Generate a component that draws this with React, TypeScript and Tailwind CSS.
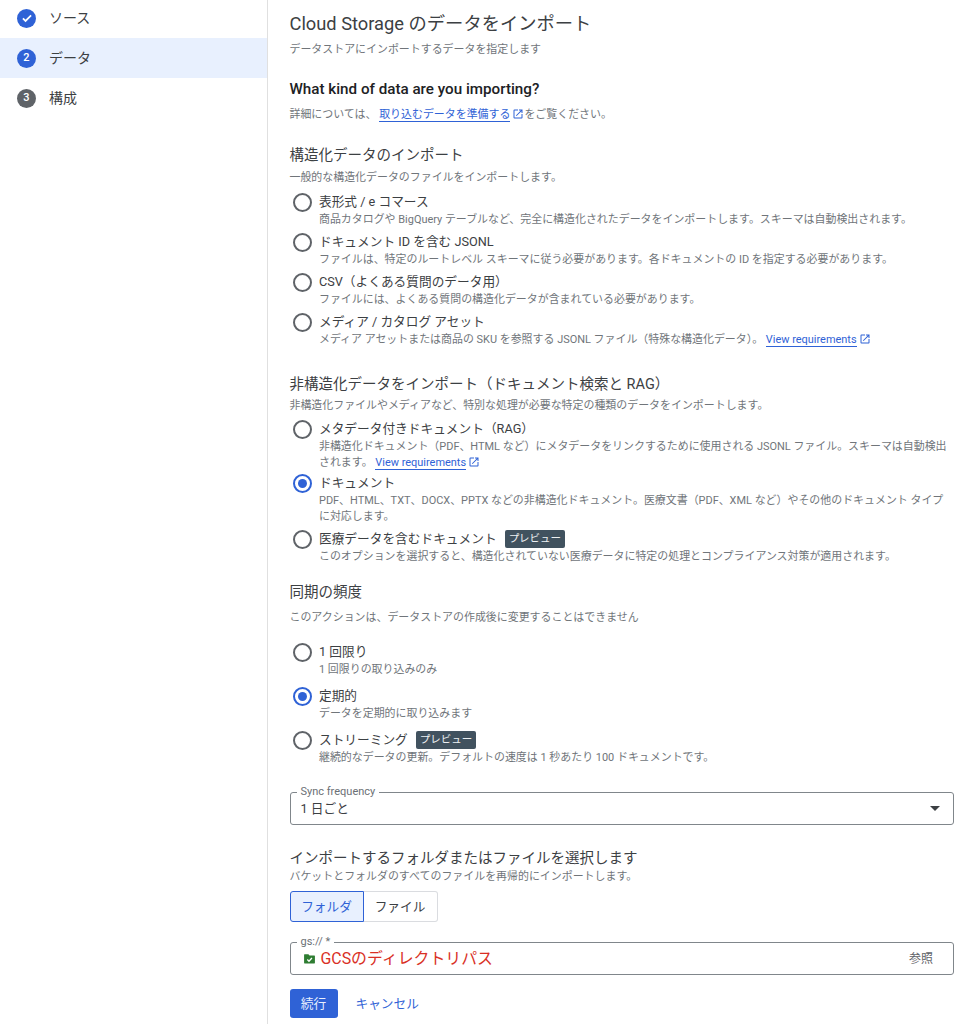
import React from "react";

const font = "font-['Roboto','Noto_Sans_CJK_JP',sans-serif]";

function Ext() {
  return (
    <svg viewBox="0 0 24 24" className="inline-block w-[12px] h-[12px] ml-[2px] align-[-2px]" fill="#2f62d6">
      <path d="M19 19H5V5h7V3H5a2 2 0 0 0-2 2v14a2 2 0 0 0 2 2h14c1.1 0 2-.9 2-2v-7h-2v7zM14 3v2h3.59l-9.83 9.83 1.41 1.41L19 6.41V10h2V3h-7z" />
    </svg>
  );
}

function LinkText({ children }: { children: React.ReactNode }) {
  return <span className="inline-block leading-[13px] text-[#2f62d6] border-b border-[#2f62d6]">{children}</span>;
}

function Badge() {
  return <span className="inline-flex items-center h-[18px] px-[4px] ml-[8px] rounded-[2px] bg-[#41525f] text-[#eef1f3] text-[10.5px] leading-none">プレビュー</span>;
}

function Radio({ checked }: { checked?: boolean }) {
  return (
    <span className={`shrink-0 flex items-center justify-center w-[19px] h-[19px] rounded-full border-2 ${checked ? "border-[#2f62d6]" : "border-[#5f6368]"}`}>
      {checked && <span className="block w-[9px] h-[9px] rounded-full bg-[#2f62d6]" />}
    </span>
  );
}

function Option({ title, badge, checked, className, children }: { title: string; badge?: boolean; checked?: boolean; className?: string; children: React.ReactNode }) {
  return (
    <div className={`flex ${className ?? ""}`}>
      <div className="w-[29.5px] pl-[3px] -mt-[1px]"><Radio checked={checked} /></div>
      <div className="flex-1 min-w-0">
        <div className="flex items-center h-[16px] text-[12.7px] text-[#3c4043]">{title}{badge && <Badge />}</div>
        <div className="text-[10.95px] leading-[16px] text-[#70757a] mt-[2px] pr-[5px]">{children}</div>
      </div>
    </div>
  );
}

function Step({ n, label, state }: { n: string; label: string; state: "done" | "active" | "todo" }) {
  return (
    <div className={`flex items-center h-[40px] pl-[17px] gap-[13px] ${state === "active" ? "bg-[#e8f0fe]" : ""}`}>
      <span className={`flex items-center justify-center w-[19px] h-[19px] rounded-full text-white text-[11px] font-medium ${state === "todo" ? "bg-[#5f6368]" : "bg-[#2f62d6]"}`}>
        {state === "done" ? (
          <svg viewBox="0 0 24 24" className="w-[14px] h-[14px]" fill="none" stroke="white" strokeWidth="3"><path d="M5 12.5l4.5 4.5L19 7.5" /></svg>
        ) : n}
      </span>
      <span className="text-[14px] text-[#3c4043]">{label}</span>
    </div>
  );
}

function Heading({ children, className }: { children: React.ReactNode; className?: string }) {
  return <div className={`text-[14.5px] leading-[20px] text-[#3c4043] ${className ?? ""}`}>{children}</div>;
}

function Sub({ children, className }: { children: React.ReactNode; className?: string }) {
  return <div className={`text-[10.95px] leading-[16px] text-[#70757a] ${className ?? ""}`}>{children}</div>;
}

function Legend({ children }: { children: React.ReactNode }) {
  return <span className="absolute -top-[7px] left-[6px] px-[4px] bg-white text-[11px] leading-[12px] text-[#6b7075]">{children}</span>;
}

export default function App() {
  return (
    <div className={`${font} flex w-[968px] h-[1024px] overflow-hidden bg-white`}>
      <aside className="w-[268px] shrink-0 border-r border-[#e0e0e0] -mt-[2px]">
        <Step n="1" label="ソース" state="done" />
        <Step n="2" label="データ" state="active" />
        <Step n="3" label="構成" state="todo" />
      </aside>
      <main className="flex-1 min-w-0 pl-[21.5px] pr-[14px]">
        <h1 className="mt-[12px] text-[18.3px] leading-[24px] text-[#3c4043]">Cloud Storage のデータをインポート</h1>
        <Sub className="mt-[6px]">データストアにインポートするデータを指定します</Sub>

        <div className="mt-[21px] text-[15.2px] leading-[20px] font-medium text-[#202124]">What kind of data are you importing?</div>
        <Sub className="mt-[8px]">詳細については、 <LinkText>取り込むデータを準備する</LinkText><Ext />をご覧ください。</Sub>

        <Heading className="mt-[23px]">構造化データのインポート</Heading>
        <Sub className="mt-[4px]">一般的な構造化データのファイルをインポートします。</Sub>

        <Option className="mt-[8px]" title="表形式 / e コマース">商品カタログや BigQuery テーブルなど、完全に構造化されたデータをインポートします。スキーマは自動検出されます。</Option>
        <Option className="mt-[6px]" title="ドキュメント ID を含む JSONL">ファイルは、特定のルートレベル スキーマに従う必要があります。各ドキュメントの ID を指定する必要があります。</Option>
        <Option className="mt-[6px]" title="CSV（よくある質問のデータ用）">ファイルには、よくある質問の構造化データが含まれている必要があります。</Option>
        <Option className="mt-[6px]" title="メディア / カタログ アセット">メディア アセットまたは商品の SKU を参照する JSONL ファイル（特殊な構造化データ）。 <LinkText>View requirements</LinkText><Ext /></Option>

        <Heading className="mt-[27px]">非構造化データをインポート（ドキュメント検索と RAG）</Heading>
        <Sub className="mt-[3px]">非構造化ファイルやメディアなど、特別な処理が必要な特定の種類のデータをインポートします。</Sub>

        <Option className="mt-[7px]" title="メタデータ付きドキュメント（RAG）">非構造化ドキュメント（PDF、HTML など）にメタデータをリンクするために使用される JSONL ファイル。スキーマは自動検出されます。 <LinkText>View requirements</LinkText><Ext /></Option>
        <Option className="mt-[4px]" checked title="ドキュメント">PDF、HTML、TXT、DOCX、PPTX などの非構造化ドキュメント。医療文書（PDF、XML など）やその他のドキュメント タイプに対応します。</Option>
        <Option className="mt-[6px]" badge title="医療データを含むドキュメント">このオプションを選択すると、構造化されていない医療データに特定の処理とコンプライアンス対策が適用されます。</Option>

        <Heading className="mt-[18px]">同期の頻度</Heading>
        <Sub className="mt-[7px]">このアクションは、データストアの作成後に変更することはできません</Sub>

        <Option className="mt-[18px]" title="1 回限り">1 回限りの取り込みのみ</Option>
        <Option className="mt-[10px]" checked title="定期的">データを定期的に取り込みます</Option>
        <Option className="mt-[10px]" badge title="ストリーミング">継続的なデータの更新。デフォルトの速度は 1 秒あたり 100 ドキュメントです。</Option>

        <div className="relative mt-[26px] flex items-center justify-between h-[33px] pl-[10px] pr-[13px] border border-[#80868b] rounded-[3px] text-[12.7px] text-[#3c4043]">
          <Legend>Sync frequency</Legend>
          <span>1 日ごと</span>
          <span className="w-0 h-0 border-x-[5px] border-x-transparent border-t-[5px] border-t-[#3c4043]" />
        </div>

        <Heading className="mt-[24px]">インポートするフォルダまたはファイルを選択します</Heading>
        <Sub className="mt-[0px]">バケットとフォルダのすべてのファイルを再帰的にインポートします。</Sub>

        <div className="mt-[6px] flex w-[148px] h-[31px] text-[12.7px]">
          <div className="flex items-center justify-center w-[74px] border border-[#2f62d6] rounded-l-[3px] bg-[#e8f0fe] text-[#2f62d6]">フォルダ</div>
          <div className="flex items-center justify-center flex-1 border border-l-0 border-[#dadce0] rounded-r-[3px] text-[#3c4043]">ファイル</div>
        </div>

        <div className="relative mt-[20px] flex items-center h-[33px] pl-[12px] pr-[20px] border border-[#80868b] rounded-[3px]">
          <Legend>gs:// *</Legend>
          <svg viewBox="0 0 24 24" className="w-[13px] h-[13px] mr-[5px] shrink-0">
            <path d="M3 4h7l2 2.5h9a1 1 0 0 1 1 1V20a1 1 0 0 1-1 1H3a1 1 0 0 1-1-1V5a1 1 0 0 1 1-1z" fill="#2e7d32" />
            <path d="M8 14l3 3 5.5-6" fill="none" stroke="white" strokeWidth="2.4" />
          </svg>
          <span className="flex-1 text-[15.9px] text-[#d93025]">GCSのディレクトリパス</span>
          <span className="text-[12px] text-[#5f6368]">参照</span>
        </div>

        <div className="mt-[14px] flex items-center gap-[18px] text-[12.7px]">
          <div className="flex items-center justify-center w-[48px] h-[29px] rounded-[3px] bg-[#2f62d6] text-[#e8f0fe]">続行</div>
          <div className="text-[#2f62d6]">キャンセル</div>
        </div>
      </main>
    </div>
  );
}
